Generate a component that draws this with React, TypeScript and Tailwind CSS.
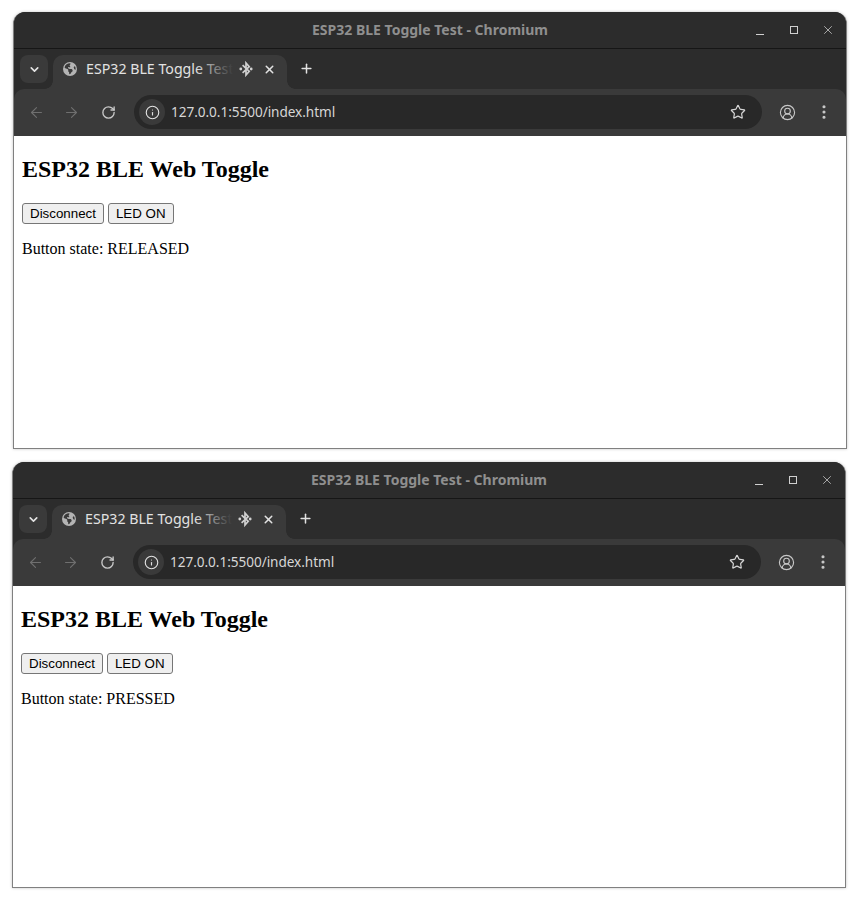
import React, { FC } from "react";
import {
  ArrowLeft,
  ArrowRight,
  ChevronDown,
  CircleUserRound,
  EllipsisVertical,
  Info,
  Plus,
  RotateCw,
  Star,
  X,
} from "lucide-react";
import { FaEarthAmericas } from "react-icons/fa6";

interface WindowProps {
  state: string;
  className: string;
}

const BluetoothActive = () => (
  <svg width="16" height="18" viewBox="0 0 16 18" fill="none" stroke="#d0d0d0" strokeWidth="1.7">
    <path d="M4.6 5.2 L11.2 11.4 L8 15 V3 L11.2 6.6 L4.6 12.8" />
    <circle cx="2.8" cy="9" r="1.4" fill="#d0d0d0" stroke="none" />
    <circle cx="13.2" cy="9" r="1.4" fill="#d0d0d0" stroke="none" />
  </svg>
);

const BrowserWindow: FC<WindowProps> = ({ state, className }) => {
  return (
    <div className={`flex flex-col w-[834px] rounded-t-[12px] overflow-hidden bg-[#2c2c2c] border-x border-b border-[#808080] shadow-[0_0_3px_rgba(0,0,0,0.25)] ${className}`}>
      <div className="relative flex items-center justify-center h-[37px] shrink-0 pb-[2px] bg-[#2c2c2c] border-b border-[#161616]">
        <span className="font-['Noto_Sans',sans-serif] font-bold text-[14px] text-[#8f8f8f]">
          ESP32 BLE Toggle Test - Chromium
        </span>
        <div className="absolute right-[11px] top-0 h-full flex items-center gap-[20px] text-[#d0d0d0]">
          <div className="w-[14px] flex justify-center pt-[9px]">
            <div className="w-[8px] h-px bg-[#d0d0d0]" />
          </div>
          <div className="w-[14px] flex justify-center">
            <div className="w-[8px] h-[8px] border border-[#d0d0d0]" />
          </div>
          <X size={14} strokeWidth={1.3} />
        </div>
      </div>

      <div className="flex h-[40px] shrink-0 bg-[#2c2c2c] pt-[6px] pl-[6px]">
        <div className="flex items-center justify-center w-[28px] h-[28px] rounded-[8px] bg-[#3a3a3a] text-[#e2e2e2]">
          <ChevronDown size={13} strokeWidth={3} />
        </div>
        <div className="relative flex items-center ml-[5px] w-[234px] h-[34px] pb-[6px] pl-[10px] rounded-t-[10px] bg-[#3a3a3a] text-[#e2e2e2]">
          <div className="absolute -left-[8px] bottom-0 w-[8px] h-[8px] bg-[radial-gradient(circle_at_0_0,#2c2c2c_7.5px,#3a3a3a_8px)]" />
          <div className="absolute -right-[8px] bottom-0 w-[8px] h-[8px] bg-[radial-gradient(circle_at_100%_0,#2c2c2c_7.5px,#3a3a3a_8px)]" />
          <FaEarthAmericas size={14} color="#b4b4b4" className="shrink-0" />
          <div className="relative ml-[9px] w-[147px] overflow-hidden whitespace-nowrap font-['Noto_Sans',sans-serif] text-[14.2px]">
            ESP32 BLE Toggle Test
            <div className="absolute right-0 top-0 h-full w-[38px] bg-gradient-to-r from-transparent to-[#3a3a3a]" />
          </div>
          <div className="ml-[5px] shrink-0">
            <BluetoothActive />
          </div>
          <X size={13} strokeWidth={2.8} className="ml-[9px] shrink-0" />
        </div>
        <div className="flex items-center ml-[12px] h-[27px] text-[#e2e2e2]">
          <Plus size={15} strokeWidth={2.4} />
        </div>
      </div>

      <div className="relative flex items-center h-[47px] shrink-0 rounded-t-[10px] bg-[#3a3a3a] pb-[1px] pl-[14px] pr-[13px] text-[#c7c7c7]">
        <ArrowLeft size={17} strokeWidth={1.6} className="text-[#6f6f6f]" />
        <ArrowRight size={17} strokeWidth={1.6} className="ml-[18px] text-[#6f6f6f]" />
        <RotateCw size={15} strokeWidth={2.2} className="ml-[21px]" />
        <div className="flex items-center shrink-0 ml-[18px] w-[628px] h-[34px] rounded-full bg-[#282828] pl-[5px] pr-[15px]">
          <div className="flex items-center justify-center w-[26px] h-[26px] rounded-full bg-[#3a3a3a]">
            <Info size={15} strokeWidth={1.8} color="#e2e2e2" />
          </div>
          <span className="ml-[6px] font-['Noto_Sans',sans-serif] text-[13.6px] tracking-[-0.05px] text-[#d6d6d6]">
            127.0.0.1:5500/index.html
          </span>
          <Star size={16} strokeWidth={1.8} className="ml-auto -translate-x-[1px]" color="#d6d6d6" />
        </div>
        <CircleUserRound size={17} strokeWidth={1.6} className="ml-[17px]" />
        <EllipsisVertical size={18} strokeWidth={2.2} className="ml-[19px]" />
      </div>

      <div className="flex-1 bg-white px-[8px] pt-[20px] text-black font-['Liberation_Serif',serif]">
        <h2 className="font-bold text-[24px] leading-[27px]">ESP32 BLE Web Toggle</h2>
        <div className="flex gap-[4px] mt-[20px] font-['Liberation_Sans',sans-serif] text-[13.33px]">
          <button className="h-[21px] px-[7px] rounded-[3px] border border-[#767676] bg-[#efefef]">Disconnect</button>
          <button className="h-[21px] px-[7px] rounded-[3px] border border-[#767676] bg-[#efefef]">LED ON</button>
        </div>
        <p className="mt-[16px] text-[16px] leading-[18px]">Button state: {state}</p>
      </div>
    </div>
  );
};

const App = () => {
  return (
    <div className="flex flex-col w-[860px] h-[902px] bg-white pt-[12px] gap-[13px]">
      <BrowserWindow state="RELEASED" className="ml-[13px] h-[437px]" />
      <BrowserWindow state="PRESSED" className="ml-[12px] h-[426px]" />
    </div>
  );
};

export default App;
